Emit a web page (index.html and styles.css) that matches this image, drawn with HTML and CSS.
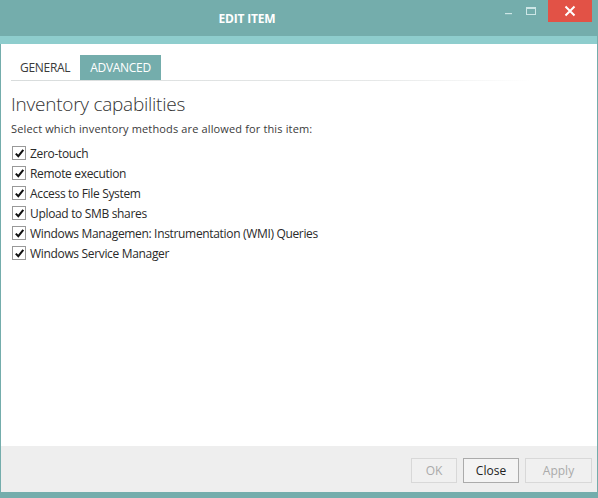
FILE: index.html
```html
<!DOCTYPE html>
<html>
<head>
<meta charset="utf-8">
<link rel="stylesheet" href="styles.css">
</head>
<body>
<div class="window">
  <div class="titlebar">
    <div class="title">EDIT ITEM</div>
    <div class="controls">
      <span class="ctl min"><svg width="10" height="10" viewBox="0 0 10 10"><rect x="1" y="7" width="7" height="1.2" fill="#cde6e6"/></svg></span>
      <span class="ctl max"><svg width="12" height="10" viewBox="0 0 12 10"><rect x="1.5" y="1.5" width="9" height="7" fill="none" stroke="#cde6e6" stroke-width="1"/><rect x="1.5" y="1.5" width="9" height="1.5" fill="#cde6e6"/></svg></span>
      <span class="ctl close"><svg width="12" height="12" viewBox="0 0 12 12"><path d="M1.5 1.5 L10.5 10.5 M10.5 1.5 L1.5 10.5" stroke="#fff" stroke-width="2"/></svg></span>
    </div>
  </div>
  <div class="strip"></div>
  <div class="content">
    <div class="tabs">
      <div class="tab">GENERAL</div>
      <div class="tab active">ADVANCED</div>
    </div>
    <div class="tabline"></div>
    <h1 class="heading">Inventory capabilities</h1>
    <p class="desc">Select which inventory methods are allowed for this item:</p>
    <ul class="checks">
      <li><span class="box"><svg width="11" height="11" viewBox="0 0 11 11"><path d="M1.8 5.6 L4.3 8.2 L9.3 1.8" fill="none" stroke="#111" stroke-width="2"/></svg></span>Zero-touch</li>
      <li><span class="box"><svg width="11" height="11" viewBox="0 0 11 11"><path d="M1.8 5.6 L4.3 8.2 L9.3 1.8" fill="none" stroke="#111" stroke-width="2"/></svg></span>Remote execution</li>
      <li><span class="box"><svg width="11" height="11" viewBox="0 0 11 11"><path d="M1.8 5.6 L4.3 8.2 L9.3 1.8" fill="none" stroke="#111" stroke-width="2"/></svg></span>Access to File System</li>
      <li><span class="box"><svg width="11" height="11" viewBox="0 0 11 11"><path d="M1.8 5.6 L4.3 8.2 L9.3 1.8" fill="none" stroke="#111" stroke-width="2"/></svg></span>Upload to SMB shares</li>
      <li><span class="box"><svg width="11" height="11" viewBox="0 0 11 11"><path d="M1.8 5.6 L4.3 8.2 L9.3 1.8" fill="none" stroke="#111" stroke-width="2"/></svg></span>Windows Managemen: Instrumentation (WMI) Queries</li>
      <li><span class="box"><svg width="11" height="11" viewBox="0 0 11 11"><path d="M1.8 5.6 L4.3 8.2 L9.3 1.8" fill="none" stroke="#111" stroke-width="2"/></svg></span>Windows Service Manager</li>
    </ul>
  </div>
  <div class="footer">
    <button class="btn ok" disabled>OK</button>
    <button class="btn close-btn">Close</button>
    <button class="btn apply" disabled>Apply</button>
  </div>
  <div class="bottom"></div>
</div>
</body>
</html>
```

FILE: styles.css
```css
* { box-sizing: border-box; }
html, body { margin: 0; padding: 0; }
body {
  width: 598px;
  height: 498px;
  font-family: "Open Sans", "Noto Sans", sans-serif;
  background: #74adac;
  overflow: hidden;
}
.window {
  width: 598px;
  height: 498px;
  display: flex;
  flex-direction: column;
  background: #74adac;
}
.titlebar {
  height: 36px;
  flex: none;
  position: relative;
  display: flex;
  align-items: center;
  justify-content: center;
}
.title {
  color: #fff;
  font-weight: 700;
  font-size: 12px;
  letter-spacing: -0.2px;
  margin-left: -104px;
}
.controls {
  position: absolute;
  top: 0;
  right: 6px;
  display: flex;
  align-items: flex-start;
}
.ctl {
  display: flex;
  align-items: center;
  justify-content: center;
}
.ctl.min { width: 18px; height: 22px; margin-right: 4px; }
.ctl.max { width: 18px; height: 22px; margin-right: 8px; }
.ctl.close {
  width: 44px;
  height: 22px;
  background: #e25246;
}
.strip {
  height: 8px;
  flex: none;
  background: #8ecdcd;
  margin-right: 1px;
}
.content {
  flex: 1;
  background: #fff;
  margin: 0 1px;
  padding: 11px 0 0 10px;
  display: flex;
  flex-direction: column;
}
.tabs {
  display: flex;
  height: 25px;
}
.tab {
  font-size: 12px;
  color: #3a3a3a;
  padding: 0 10px 0 9px;
  line-height: 25px;
  letter-spacing: -0.3px;
}
.tab.active {
  background: #74adac;
  color: #fff;
  padding: 0 10px;
}
.tabline {
  height: 1px;
  width: 520px;
  background: linear-gradient(to right, #d8dcdc 0%, #e6e8e8 70%, rgba(255,255,255,0) 100%);
}
.heading {
  margin: 11px 0 0 0;
  font-size: 19px;
  font-weight: 300;
  color: #333;
  line-height: 24px;
  letter-spacing: -0.25px;
}
.desc {
  margin: 5px 0 0 0;
  font-size: 11px;
  color: #3a3a3a;
  line-height: 16px;
  letter-spacing: 0.14px;
}
.checks {
  list-style: none;
  margin: 6px 0 0 0;
  padding: 0;
}
.checks li {
  display: flex;
  align-items: center;
  height: 20px;
  font-size: 12px;
  color: #2a2a2a;
  letter-spacing: -0.33px;
}
.box {
  width: 14px;
  height: 14px;
  border: 1px solid #999;
  background: #fff;
  display: flex;
  align-items: center;
  justify-content: center;
  margin: 0 4px 0 1px;
}
.footer {
  height: 46px;
  flex: none;
  background: #eeeeee;
  margin: 0 1px;
  display: flex;
  justify-content: flex-end;
  align-items: center;
  padding: 0 5px 0 0;
  gap: 6px;
}
.btn {
  height: 25px;
  font-family: "Open Sans", "Noto Sans", sans-serif;
  font-size: 12px;
  background: #efefef;
  border: 1px solid #ababab;
  color: #222;
  padding: 0;
  margin-top: 2px;
}
.btn:disabled {
  color: #aaa;
  border-color: #d8d8d8;
  background: #f0f0f0;
}
.btn.ok { width: 46px; }
.btn.close-btn { width: 56px; background: #f4f4f4; }
.btn.apply { width: 67px; }
.bottom {
  height: 6px;
  flex: none;
}
```
